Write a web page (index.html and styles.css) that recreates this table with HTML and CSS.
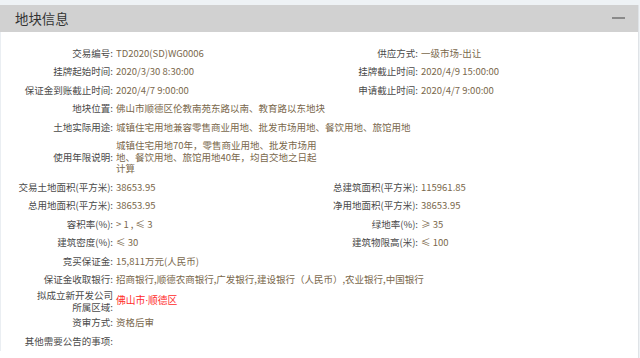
FILE: index.html
```html
<!DOCTYPE html>
<html lang="zh-CN">
<head>
<meta charset="utf-8">
<title>地块信息</title>
<link rel="stylesheet" href="styles.css">
</head>
<body>
<div class="panel">
  <div class="panel-head">
    <h2 class="panel-title">地块信息</h2>
    <span class="collapse" aria-label="收起"></span>
  </div>
  <div class="panel-body">
    <table class="info">
      <colgroup>
        <col class="c-l1"><col class="c-v1"><col class="c-l2"><col class="c-v2">
      </colgroup>
      <tr>
        <td class="lbl">交易编号:</td><td class="val">TD2020(SD)WG0006</td>
        <td class="lbl">供应方式:</td><td class="val">一级市场-出让</td>
      </tr>
      <tr>
        <td class="lbl">挂牌起始时间:</td><td class="val">2020/3/30 8:30:00</td>
        <td class="lbl">挂牌截止时间:</td><td class="val">2020/4/9 15:00:00</td>
      </tr>
      <tr>
        <td class="lbl">保证金到账截止时间:</td><td class="val">2020/4/7 9:00:00</td>
        <td class="lbl">申请截止时间:</td><td class="val">2020/4/7 9:00:00</td>
      </tr>
      <tr>
        <td class="lbl">地块位置:</td><td class="val" colspan="3">佛山市顺德区伦教南苑东路以南、教育路以东地块</td>
      </tr>
      <tr>
        <td class="lbl">土地实际用途:</td><td class="val" colspan="3">城镇住宅用地兼容零售商业用地、批发市场用地、餐饮用地、旅馆用地</td>
      </tr>
      <tr>
        <td class="lbl">使用年限说明:</td><td class="val">城镇住宅用地70年，零售商业用地、批发市场用地、餐饮用地、旅馆用地40年，均自交地之日起计算</td>
        <td></td><td></td>
      </tr>
      <tr>
        <td class="lbl">交易土地面积(平方米):</td><td class="val">38653.95</td>
        <td class="lbl">总建筑面积(平方米):</td><td class="val">115961.85</td>
      </tr>
      <tr>
        <td class="lbl">总用地面积(平方米):</td><td class="val">38653.95</td>
        <td class="lbl">净用地面积(平方米):</td><td class="val">38653.95</td>
      </tr>
      <tr>
        <td class="lbl">容积率(%):</td><td class="val">&gt; 1 , ≤ 3</td>
        <td class="lbl">绿地率(%):</td><td class="val">≥ 35</td>
      </tr>
      <tr>
        <td class="lbl">建筑密度(%):</td><td class="val">≤ 30</td>
        <td class="lbl">建筑物限高(米):</td><td class="val">≤ 100</td>
      </tr>
      <tr>
        <td class="lbl">竞买保证金:</td><td class="val" colspan="3">15,811万元(人民币)</td>
      </tr>
      <tr>
        <td class="lbl">保证金收取银行:</td><td class="val" colspan="3">招商银行,顺德农商银行,广发银行,建设银行（人民币）,农业银行,中国银行</td>
      </tr>
      <tr class="tight">
        <td class="lbl">拟成立新开发公司<br>所属区域:</td><td class="val red" colspan="3">佛山市·顺德区</td>
      </tr>
      <tr>
        <td class="lbl">资审方式:</td><td class="val" colspan="3">资格后审</td>
      </tr>
      <tr>
        <td class="lbl">其他需要公告的事项:</td><td class="val" colspan="3"></td>
      </tr>
    </table>
  </div>
</div>
</body>
</html>
```

FILE: styles.css
```css
html, body {
  margin: 0;
  padding: 0;
}
body {
  background: #eef2f5;
  padding: 5px 1px 0 0;
  font-family: "Noto Sans CJK SC", "Noto Sans", sans-serif;
  height: 358px;
  box-sizing: border-box;
  overflow: hidden;
}
.panel {
  background: #ffffff;
  border-right: 1px solid #dfe3e7;
  height: 353px;
}
.panel-head {
  height: 27px;
  background: #d1d1d1;
  display: flex;
  align-items: center;
  justify-content: space-between;
  padding: 0 13px 0 15px;
}
.panel-title {
  margin: 0;
  font-size: 13.4px;
  font-weight: normal;
  color: #333333;
  line-height: 27px;
}
.collapse {
  display: block;
  width: 13px;
  height: 2px;
  background: #8a8a8a;
  margin-top: -2px;
}
.panel-body {
  border-left: 1px solid #eaeef2;
  padding-top: 12px;
}
.info {
  width: 100%;
  table-layout: fixed;
  border-collapse: collapse;
  border-spacing: 0;
  font-size: 9.5px;
}
.c-l1 { width: 113px; }
.c-v1 { width: 208px; }
.c-l2 { width: 97px; }
.info td {
  padding: 3.5px 0;
  line-height: 11.5px;
  vertical-align: middle;
}
.info td.lbl {
  text-align: right;
  color: #4a4a4a;
  padding-right: 1px;
  white-space: nowrap;
}
.info td.val {
  color: #7a684c;
  padding-left: 2px;
}
.info td.red {
  color: #ff2b2b;
  font-family: "Noto Sans", "Noto Sans CJK SC", sans-serif;
  font-size: 9.8px;
}
.info tr.tight td {
  padding-top: 0;
  padding-bottom: 0;
  line-height: 12.4px;
}
```
